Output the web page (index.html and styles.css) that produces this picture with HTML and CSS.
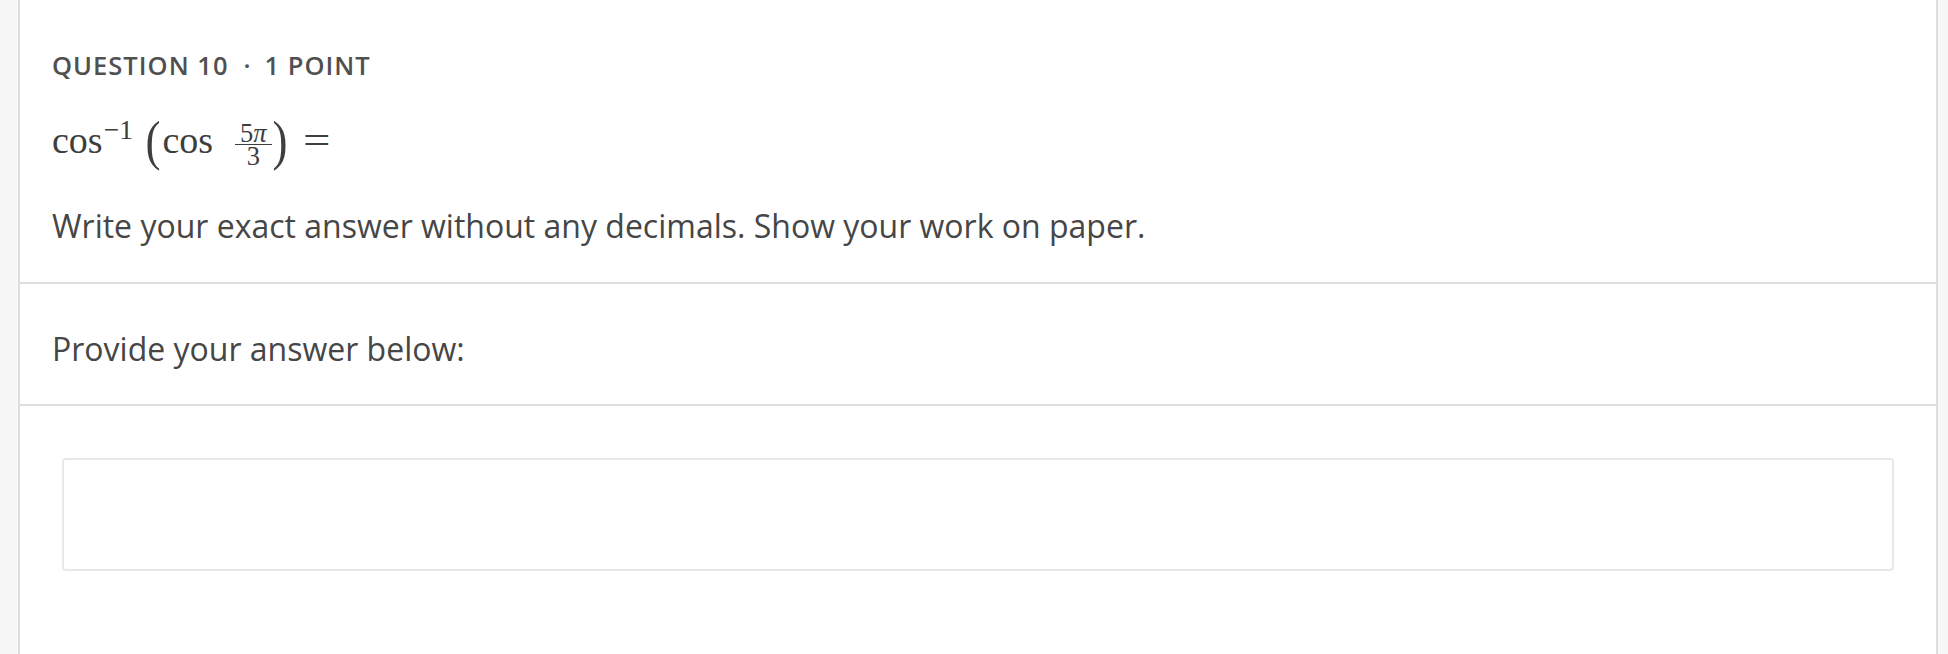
FILE: index.html
```html
<!DOCTYPE html>
<html lang="en">
<head>
<meta charset="utf-8">
<title>Question 10</title>
<link rel="stylesheet" href="styles.css">
</head>
<body>
<div class="page">
  <main class="card">
    <section class="question">
      <div class="label"><span>Question 10</span><span class="dot">·</span><span>1 point</span></div>
      <div class="math">
        <span class="fn">cos</span><span class="sup">−1</span><span class="paren open">(</span><span class="fn">cos</span><span class="frac"><span class="num">5<span class="pi">π</span></span><span class="den">3</span></span><span class="paren close">)</span><span class="eq">=</span>
      </div>
      <p class="prompt">Write your exact answer without any decimals. Show your work on paper.</p>
    </section>
    <section class="answer-head">
      <p>Provide your answer below:</p>
    </section>
    <section class="answer-body">
      <div class="answer-input"></div>
    </section>
  </main>
</div>
</body>
</html>
```
FILE: styles.css
```css
html, body {
  margin: 0;
  padding: 0;
}
body {
  background: #f7f7f7;
  font-family: "Open Sans", "Noto Sans", sans-serif;
  color: #464646;
}
.page {
  height: 654px;
  overflow: hidden;
  padding: 0 10px 0 18px;
}
.card {
  display: block;
  background: #ffffff;
  border-left: 2px solid #dedede;
  border-right: 2px solid #dedede;
  min-height: 654px;
}
.question {
  padding: 46px 32px 35px;
  border-bottom: 2px solid #dedede;
}
.label {
  font-size: 25.5px;
  line-height: 38px;
  font-weight: 600;
  text-transform: uppercase;
  letter-spacing: 0.04em;
  color: #505050;
}
.label .dot {
  margin: 0 13px 0 15px;
}
.math {
  font-family: "Liberation Serif", "Times New Roman", serif;
  font-size: 38px;
  line-height: 1;
  height: 121px;
  padding-top: 31.5px;
  box-sizing: border-box;
  color: #3e3e3e;
  white-space: nowrap;
}
.math .fn {
  display: inline-block;
}
.math .sup {
  display: inline-block;
  font-size: 27.5px;
  vertical-align: 14.5px;
  margin-left: 1px;
}
.math .paren {
  display: inline-block;
  font-size: 45px;
  line-height: 1;
  vertical-align: -3px;
  transform: scaleY(1.23);
}
.math .paren.open {
  margin-left: 12.5px;
  margin-right: 2px;
}
.math .paren.close {
  margin-left: 1px;
}
.math .frac {
  display: inline-flex;
  flex-direction: column;
  align-items: center;
  vertical-align: 11px;
  margin-left: 22px;
  font-size: 26.5px;
}
.math .num {
  display: block;
  line-height: 22px;
  padding: 0 5px;
  border-bottom: 1.4px solid #3e3e3e;
}
.math .pi {
  font-style: italic;
}
.math .den {
  display: block;
  line-height: 22px;
}
.math .eq {
  display: inline-block;
  margin-left: 18px;
  transform: scaleX(1.28);
}
.prompt {
  margin: 0;
  font-size: 32px;
  line-height: 42px;
}
.answer-head {
  padding: 44px 32px 34px;
  border-bottom: 2px solid #dedede;
}
.answer-head p {
  margin: 0;
  font-size: 32px;
  line-height: 42px;
}
.answer-body {
  padding: 52px 42px 0;
}
.answer-input {
  height: 113px;
  box-sizing: border-box;
  border: 2px solid #e8e8e8;
  border-radius: 4px;
  background: #ffffff;
}
```
